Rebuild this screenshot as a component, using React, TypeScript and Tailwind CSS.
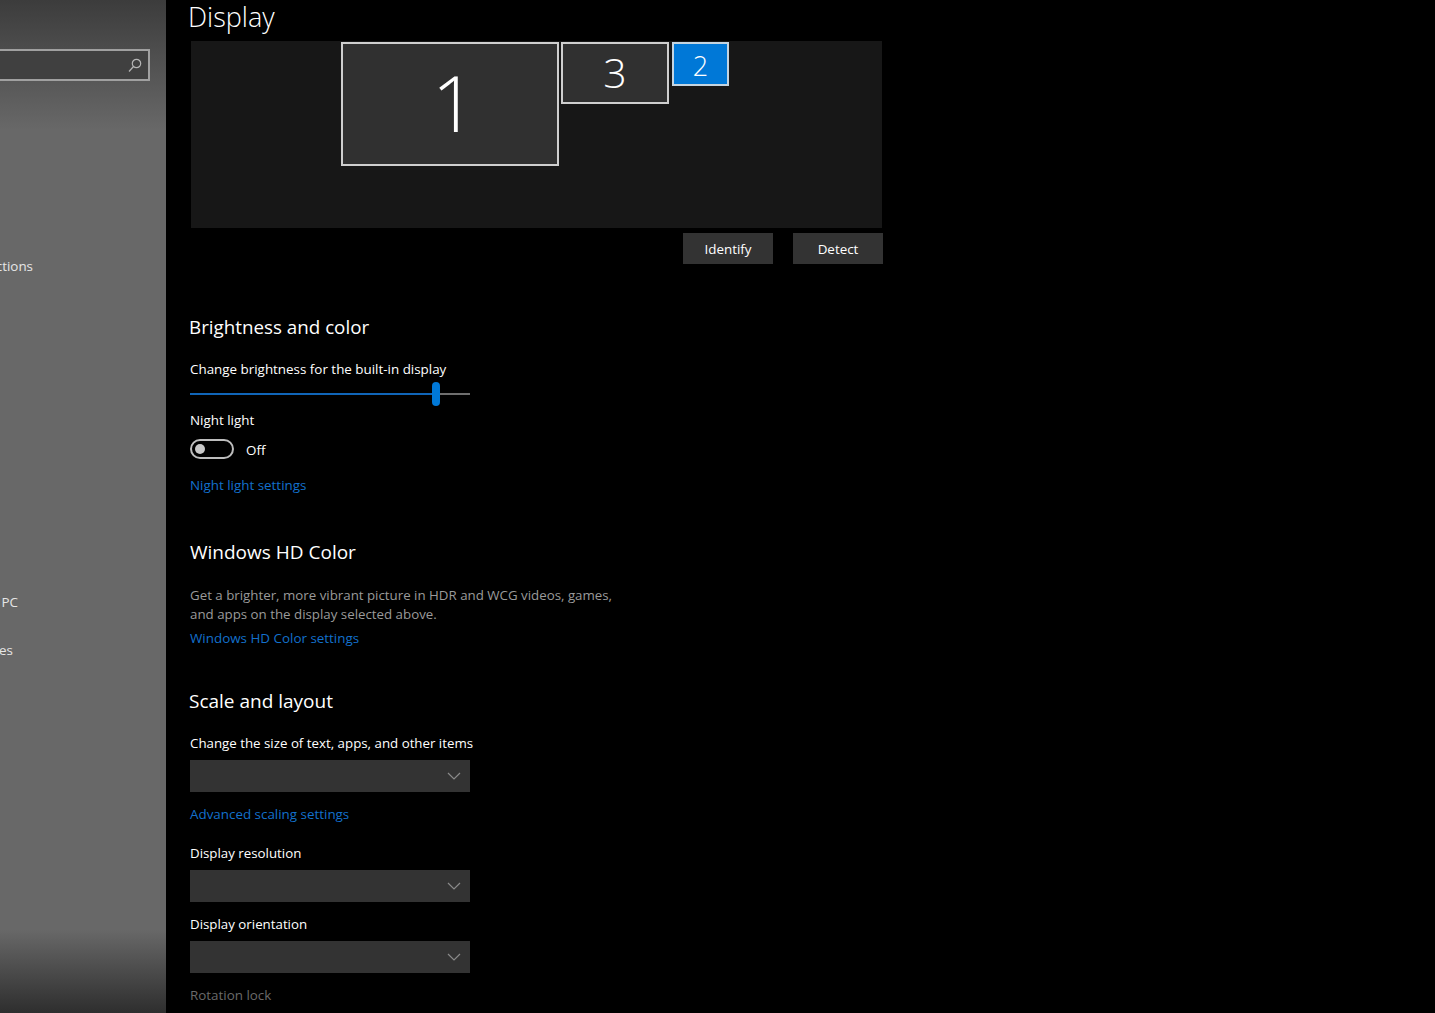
import React from "react";

const font = { fontFamily: '"Open Sans", "Noto Sans", sans-serif' };

function Chevron() {
  return (
    <svg width="14" height="8" viewBox="0 0 14 8" fill="none" stroke="#8a8a8a" strokeWidth="1.2">
      <path d="M1 1l6 6 6-6" />
    </svg>
  );
}

function Select() {
  return (
    <div className="w-[280px] h-[32px] bg-[#333333] flex items-center justify-end pr-[9px]">
      <Chevron />
    </div>
  );
}

function SideItem({ top, text, w }: { top: string; text: string; w: string }) {
  return (
    <div className={`${top} ${w} flex justify-end whitespace-nowrap text-[13.4px] leading-[20px] text-[#e6e6e6]`}>
      {text}
    </div>
  );
}

export default function App() {
  return (
    <div className="flex items-start w-[1435px] h-[1013px] bg-black overflow-hidden text-white" style={font}>
      <aside className="w-[166px] h-[1013px] shrink-0 overflow-hidden bg-[linear-gradient(to_bottom,#3c3c3c_0px,#686868_130px,#686868_930px,#2e2e2e_1013px)]">
        <div className="flex flex-col">
          <div className="mt-[49px] w-[150px] h-[32px] border-2 border-[#a0a0a0] border-l-0 bg-[#404040] flex items-center justify-end pr-[6px]">
            <svg width="14" height="15" viewBox="0 0 14 15" fill="none" stroke="#b5b5b5" strokeWidth="1.2">
              <circle cx="8.5" cy="5.5" r="4.2" />
              <path d="M5.5 8.5L1 13.5" />
            </svg>
          </div>
          <SideItem top="mt-[175px]" w="w-[33px]" text="Notifications & actions" />
          <SideItem top="mt-[316px]" w="w-[18px]" text="Projecting to this PC" />
          <SideItem top="mt-[28px]" w="w-[13px]" text="Shared experiences" />
        </div>
      </aside>
      <main className="flex-1 pl-[24px] flex flex-col items-start">
        <h1 className="text-[27px] leading-[34px] font-light -ml-[2px] h-[41px]">Display</h1>
        <div className="relative w-[691px] h-[187px] ml-[1px] bg-[#171717]">
          <div className="absolute left-[150px] top-[1px] w-[218px] h-[124px] border-2 border-[#cfcfcf] bg-[#303030] flex items-center justify-center pl-[8px] pb-[4px] text-[78px] font-light leading-none">1</div>
          <div className="absolute left-[370px] top-[1px] w-[108px] h-[62px] border-2 border-[#cfcfcf] bg-[#303030] flex items-center justify-center pb-[2px] text-[41px] font-light leading-none">3</div>
          <div className="absolute left-[481px] top-[1px] w-[57px] h-[44px] border-2 border-[#c4d4e0] bg-[#0078d7] flex items-center justify-center pt-[2px] text-[27px] font-light leading-none">2</div>
        </div>
        <div className="w-[693px] flex justify-end gap-[20px] mt-[5px]">
          <button className="w-[90px] h-[31px] pt-[2px] bg-[#333333] text-[13.4px] text-white">Identify</button>
          <button className="w-[90px] h-[31px] pt-[2px] bg-[#333333] text-[13.4px] text-white">Detect</button>
        </div>
        <h2 className="mt-[50px] text-[18.8px] leading-[26px] -ml-[1px]">Brightness and color</h2>
        <div className="mt-[19px] text-[13.4px] leading-[20px]">Change brightness for the built-in display</div>
        <div className="mt-[3px] w-[280px] h-[24px] relative flex items-center">
          <div className="h-[2px] w-[246px] bg-[#1065b8]" />
          <div className="h-[2px] flex-1 bg-[#6e6e6e]" />
          <div className="absolute left-[242px] top-0 w-[8px] h-[24px] rounded-full bg-[#0078d7]" />
        </div>
        <div className="mt-[4px] text-[13.4px] leading-[20px]">Night light</div>
        <div className="mt-[9px] flex items-center gap-[12px]">
          <div className="w-[44px] h-[20px] rounded-full border-2 border-[#bdbdbd] flex items-center pl-[3px]">
            <div className="w-[10px] h-[10px] rounded-full bg-[#c8c8c8]" />
          </div>
          <span className="text-[13.4px] leading-[20px] translate-y-[1px]">Off</span>
        </div>
        <a className="mt-[16px] text-[13.4px] leading-[20px] text-[#1370cc]">Night light settings</a>
        <h2 className="mt-[44px] text-[19px] leading-[26px]">Windows HD Color</h2>
        <p className="mt-[21px] text-[13.3px] leading-[19px] text-[#9a9a9a] w-[440px]">
          Get a brighter, more vibrant picture in HDR and WCG videos, games,
          <br />
          and apps on the display selected above.
        </p>
        <a className="mt-[4px] text-[13.4px] leading-[20px] text-[#1370cc]">Windows HD Color settings</a>
        <h2 className="mt-[40px] text-[19px] leading-[26px] -ml-[1px]">Scale and layout</h2>
        <div className="mt-[19px] text-[13.3px] leading-[20px]">Change the size of text, apps, and other items</div>
        <div className="mt-[7px]"><Select /></div>
        <a className="mt-[12px] text-[13.4px] leading-[20px] text-[#1370cc]">Advanced scaling settings</a>
        <div className="mt-[19px] text-[13.3px] leading-[20px]">Display resolution</div>
        <div className="mt-[7px]"><Select /></div>
        <div className="mt-[12px] text-[13.3px] leading-[20px]">Display orientation</div>
        <div className="mt-[7px]"><Select /></div>
        <div className="mt-[12px] text-[13.4px] leading-[20px] text-[#6a6a6a]">Rotation lock</div>
      </main>
    </div>
  );
}
